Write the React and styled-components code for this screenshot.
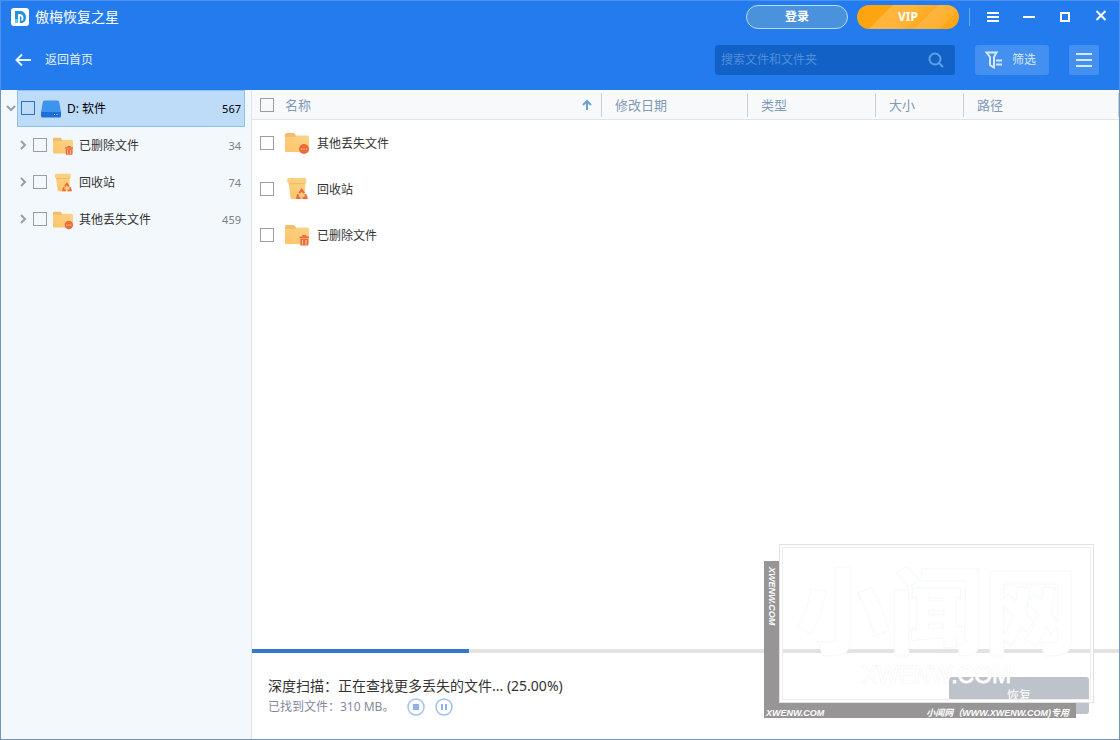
import { useState } from "react";
import styled, { createGlobalStyle, css } from "styled-components";

const GlobalStyle = createGlobalStyle`
  * {
    box-sizing: border-box;
  }
  body {
    margin: 0;
    font-family: "Noto Sans", "Noto Sans CJK SC", sans-serif;
    font-size: 12px;
    line-height: 18px;
    color: #333;
    background: #fff;
  }
  button,
  input {
    font: inherit;
  }
`;

const Window = styled.div`
  position: relative;
  display: flex;
  flex-direction: column;
  width: 100%;
  min-height: 100vh;
`;

const Header = styled.header`
  background: #237bee;
  color: #fff;
  border: 1px solid #4a92f2;
  border-bottom: none;
`;

const TitleBar = styled.div`
  display: flex;
  align-items: center;
  height: 32px;
  padding-left: 10px;
`;

const AppName = styled.h1`
  flex: 1;
  margin: 0 0 0 6px;
  font-size: 14px;
  font-weight: 400;
  line-height: 18px;
`;

const Pill = styled.button`
  width: 102px;
  height: 24px;
  margin-right: 9px;
  padding: 0;
  border: 1px solid #b8dcf8;
  border-radius: 12px;
  background: #4a92dc;
  color: #fff;
  font-weight: 700;
  cursor: pointer;
  ${(props) =>
    props.$vip &&
    css`
      border: none;
      background: linear-gradient(
        135deg,
        #ffa411 28%,
        #ffb63d 29%,
        #ffb43a 48%,
        #fdaa24 64%,
        #fdb440 65%,
        #ffb02c 84%,
        #ffa716 85%
      );
    `}
`;

const Divider = styled.span`
  width: 1px;
  height: 18px;
  margin: 0 5px 0 1px;
  background: #6aa8f8;
`;

const WindowButton = styled.button`
  display: flex;
  align-items: center;
  justify-content: center;
  width: 36px;
  height: 30px;
  padding: 0;
  border: none;
  background: none;
  color: #fff;
`;

const Toolbar = styled.div`
  display: flex;
  align-items: center;
  gap: 20px;
  padding: 12px 20px 15px 14px;
`;

const BackLink = styled.a`
  display: flex;
  align-items: center;
  gap: 14px;
  margin-right: auto;
  color: #e4f1ff;
  text-decoration: none;
`;

const SearchBox = styled.div`
  display: flex;
  align-items: center;
  width: 240px;
  height: 30px;
  padding: 0 11px 0 6px;
  border-radius: 3px;
  background: #1261c6;
  color: #5f9fe8;
`;

const SearchInput = styled.input`
  flex: 1;
  min-width: 0;
  padding: 0;
  border: none;
  outline: none;
  background: none;
  color: #fff;
  &::placeholder {
    color: #4f8edb;
    opacity: 1;
  }
`;

const ToolButton = styled.button`
  display: flex;
  align-items: center;
  justify-content: center;
  gap: 10px;
  width: ${(props) => (props.$wide ? "74px" : "30px")};
  height: 30px;
  padding: ${(props) => (props.$wide ? "0 3px 0 0" : "0")};
  border: none;
  border-radius: 3px;
  background: #4490f1;
  color: #d5e8ff;
`;

const Body = styled.div`
  flex: 1;
  display: flex;
  border: 1px solid #6c98bd;
  border-top: none;
`;

const Sidebar = styled.nav`
  flex: none;
  width: 251px;
  border-right: 1px solid #dde3ea;
  background: #f3f8fd;
`;

const Tree = styled.ul`
  margin: 0;
  padding: 0;
  list-style: none;
`;

const TreeRow = styled.div`
  display: flex;
  align-items: center;
  height: 37px;
  padding-right: ${(props) => (props.$root ? "6px" : "10px")};
  padding-left: ${(props) => (props.$root ? "0" : "16px")};
`;

const Toggle = styled.button`
  display: flex;
  align-items: center;
  justify-content: center;
  flex: none;
  width: ${(props) => (props.$root ? "16px" : "12px")};
  margin-right: ${(props) => (props.$root ? "0" : "4px")};
  padding: ${(props) => (props.$root ? "0 0 1px 3px" : "0 0 1px")};
  border: none;
  background: none;
  color: #94a0ab;
`;

const TreeLabel = styled.label`
  flex: 1;
  display: flex;
  align-items: center;
  gap: 6px;
  height: 37px;
  input {
    margin-bottom: 1px;
  }
  ${(props) =>
    props.$selected &&
    css`
      padding: 0 3px;
      border: 1px solid #8fc1ee;
      background: #bedbf8;
      color: #000;
    `}
`;

const Count = styled.span`
  margin-left: auto;
  font-size: 11px;
  color: ${(props) => (props.$selected ? "#000" : "#7c8289")};
`;

const Checkbox = styled.input.attrs({ type: "checkbox" })`
  appearance: none;
  flex: none;
  width: 14px;
  height: 14px;
  margin: 0;
  border: 1px solid ${(props) => (props.$active ? "#2b71c9" : "#9b9fa5")};
  background: transparent;
  &:checked {
    background: #237bee;
  }
`;

const Main = styled.main`
  flex: 1;
  min-width: 0;
  display: flex;
  flex-direction: column;
`;

const TableArea = styled.div`
  flex: 1;
`;

const Table = styled.table`
  width: 100%;
  table-layout: fixed;
  border-collapse: separate;
  border-spacing: 0;
`;

const Th = styled.th`
  width: ${(props) => props.$width || "auto"};
  height: 30px;
  padding: 0 13px;
  border-bottom: 1px solid #dfe4e9;
  background: linear-gradient(#c3cfdb, #c3cfdb) right center / 1px 24px
    no-repeat #f7f9fb;
  color: #8199b6;
  font-size: 13px;
  font-weight: 400;
  text-align: left;
  &:first-child {
    padding: 0 10px 0 8px;
  }
`;

const HeadCell = styled.div`
  display: flex;
  align-items: center;
  gap: 11px;
  svg {
    margin-left: auto;
  }
`;

const Td = styled.td`
  height: 46px;
  padding: 0 8px;
`;

const FileLabel = styled.label`
  display: flex;
  align-items: center;
  svg {
    margin: 0 8px 0 11px;
  }
`;

const FileName = styled.span`
  padding-top: 2px;
`;

const Progress = styled.div`
  height: 4px;
  background: #e3e3e3;
`;

const ProgressFill = styled.div`
  height: 100%;
  background: #3377d2;
`;

const Footer = styled.footer`
  display: flex;
  justify-content: space-between;
  align-items: flex-start;
  height: 86px;
  padding: 24px 30px 0 16px;
`;

const ScanTitle = styled.p`
  margin: 0 0 2px;
  font-size: 14px;
  line-height: 18px;
`;

const ScanInfo = styled.div`
  display: flex;
  align-items: center;
  gap: 10px;
  height: 20px;
  color: #858a9b;
`;

const ScanText = styled.span`
  padding-right: 3px;
`;

const RoundButton = styled.button`
  display: flex;
  width: 18px;
  height: 18px;
  padding: 0;
  border: none;
  background: none;
`;

const RecoverButton = styled.button`
  width: 140px;
  height: 37px;
  padding: 0;
  border: none;
  border-radius: 3px;
  background: #bdc2cb;
  color: #fff;
`;

/* stamp laid over the bottom right corner of the window */
const Stamp = styled.div`
  position: absolute;
  right: 26px;
  bottom: 22px;
  display: grid;
  grid-template-columns: 15px 297px 18px;
  grid-template-rows: 17px 142px 15px;
  pointer-events: none;
`;

const StampSide = styled.div`
  grid-column: 1;
  grid-row: 2 / 4;
  padding-top: 6px;
  background: #979595;
  color: #fff;
  font: italic 700 9px/15px "Liberation Sans", sans-serif;
  writing-mode: vertical-rl;
`;

const StampBottom = styled.div`
  grid-column: 1 / 3;
  grid-row: 3;
  display: flex;
  justify-content: space-between;
  padding: 0 7px 0 2px;
  background: #979595;
  color: #fff;
  font: italic 700 9px/20px "Liberation Sans", "Noto Sans CJK SC", sans-serif;
`;

const StampFrame = styled.div`
  grid-column: 2 / 4;
  grid-row: 1 / 3;
  display: flex;
  flex-direction: column;
  align-items: center;
  border: 1px solid #e2e2e2;
  outline: 1px solid #ededed;
  outline-offset: -4px;
  box-shadow: inset 0 0 0 3px #fff;
`;

const StampName = styled.div`
  margin-top: 28px;
  color: #fff;
  font: 900 94px/84px "Liberation Sans", "Noto Sans CJK SC", sans-serif;
  -webkit-text-stroke: 1px #f6f9f9;
`;

const StampSite = styled.div`
  margin-top: 4px;
  color: #fff;
  font: 23px/28px "Liberation Sans", sans-serif;
  -webkit-text-stroke: 1px #f4f4f4;
  paint-order: stroke fill;
`;

const LogoIcon = () => (
  <svg width="18" height="18" viewBox="0 0 18 18">
    <rect width="18" height="18" rx="3" fill="#fff" />
    <path d="M4 3h6.500q4.500 1.500 4.500 6.500 0 4-3.500 5.500H4z" fill="#2394dc" />
    <path
      d="M8 15.500V7q3.500 0 3.500 3 0 1.500-.8 2.500"
      fill="none"
      stroke="#fff"
      strokeWidth="1.800"
    />
    <path d="M4 11h3v4H4z" fill="#63c4f4" />
  </svg>
);

const TrashBadge = () => (
  <g fill="#ee6c3c">
    <path d="M14.500 12.500h9.500v1.800h-9.500zM17.300 11h4v1.500h-4z" />
    <path d="M15.300 14.800h8V21.500h-8z" />
    <path d="M17.500 16v4.500M21 16v4.500" stroke="#fbd3b4" />
  </g>
);

const DotsBadge = () => (
  <g>
    <circle cx="19" cy="17" r="5" fill="#ee6c3c" />
    <path d="M16 16.500h1.300v1.300H16zm2.400 0h1.300v1.300h-1.300zm2.400 0h1.300v1.300h-1.300z" fill="#fbc4a4" />
  </g>
);

const FolderIcon = ({ size, badge }) => (
  <svg width={size} height={size} viewBox="0 -1 24 24">
    <path d="M0 2.500Q0 1 1.500 1h7q1 0 1.500 1l1 2H22v6H0z" fill="#f5bd69" />
    <path d="M0 5h10l1.500-1.500h11Q24 3.500 24 5v13.500q0 1.500-1.500 1.500h-21Q0 20 0 18.500z" fill="url(#folder)" />
    {badge === "trash" ? <TrashBadge /> : <DotsBadge />}
  </svg>
);

const BinIcon = ({ size }) => (
  <svg width={size} height={size} viewBox="0 0 24 24">
    <path d="M3.500 5h17l-1 15.500q-.2 1.500-1.500 1.500H7q-1.300 0-1.500-1.500z" fill="url(#folder)" />
    <path d="M4 1h16q1.200 0 1.200 1.300V5q0 1-1 1H3.300q-1 0-1-1V2.300Q2.300 1 4 1z" fill="#fbcf80" />
    <path d="M4 6h16v1.200H4z" fill="#f5bb65" />
    <g fill="none" stroke="#ee6c3c" strokeWidth="2.200">
      <path d="M14.300 16.200l2.400-3.400 2.400 3.400" />
      <path d="M13.200 17.200l-1 3.600h3.200" />
      <path d="M20.200 17.200l1.200 3.600h-3.800" />
    </g>
  </svg>
);

const DriveIcon = () => (
  <svg width="20" height="20" viewBox="0 0 20 20">
    <path d="M1.800 3Q2 1.500 3.500 1.500h13q1.500 0 1.700 1.500L20 13H0z" fill="#3e94ec" />
    <path d="M0 13h20v4q0 1.500-1.500 1.500h-17Q0 18.500 0 17z" fill="#1e6fda" />
    <path d="M13 15h1v1h-1zm2.500 0h1v1h-1z" fill="#d4eaff" />
  </svg>
);

const Gradients = () => (
  <svg width="0" height="0" style={{ position: "absolute" }}>
    <defs>
      <linearGradient id="folder" x1="0" y1="1" x2="1" y2="0">
        <stop offset="0" stopColor="#fdc36a" />
        <stop offset="1" stopColor="#fbd486" />
      </linearGradient>
    </defs>
  </svg>
);

const Chevron = ({ open }) => (
  <svg width="12" height="12" viewBox="0 0 12 12" fill="none" stroke="currentColor" strokeWidth="2">
    <path d={open ? "M2 4l4 4 4-4" : "M4 2l4 4-4 4"} />
  </svg>
);

const ItemIcon = ({ kind, size }) => {
  if (kind === "drive") return <DriveIcon />;
  if (kind === "bin") return <BinIcon size={size} />;
  return <FolderIcon size={size} badge={kind} />;
};

const folders = [
  { name: "已删除文件", kind: "trash", count: 34 },
  { name: "回收站", kind: "bin", count: 74 },
  { name: "其他丢失文件", kind: "dots", count: 459 },
];

const files = [folders[2], folders[1], folders[0]];

const App = () => {
  const [query, setQuery] = useState("");
  const progress = 25;

  return (
    <Window>
      <GlobalStyle />
      <Gradients />
      <Header>
        <TitleBar>
          <LogoIcon />
          <AppName>傲梅恢复之星</AppName>
          <Pill>登录</Pill>
          <Pill $vip>VIP</Pill>
          <Divider />
          <WindowButton aria-label="菜单">
            <svg width="12" height="12" stroke="currentColor" strokeWidth="2">
              <path d="M0 2h12M0 6h12M0 10h12" />
            </svg>
          </WindowButton>
          <WindowButton aria-label="最小化">
            <svg width="12" height="12" stroke="currentColor" strokeWidth="2">
              <path d="M0 6h12" />
            </svg>
          </WindowButton>
          <WindowButton aria-label="最大化">
            <svg width="10" height="10" fill="none" stroke="currentColor" strokeWidth="2">
              <path d="M1 1h8v8H1z" />
            </svg>
          </WindowButton>
          <WindowButton aria-label="关闭">
            <svg width="12" height="14" fill="none" stroke="currentColor" strokeWidth="2">
              <path d="M1.500 1l9 9M10.500 1l-9 9" />
            </svg>
          </WindowButton>
        </TitleBar>
        <Toolbar>
          <BackLink href="#">
            <svg width="16" height="14" fill="none" stroke="currentColor" strokeWidth="2">
              <path d="M16 7H1M7 1.500L1.500 7 7 12.500" />
            </svg>
            返回首页
          </BackLink>
          <SearchBox>
            <SearchInput
              aria-label="搜索"
              placeholder="搜索文件和文件夹"
              value={query}
              onChange={(e) => setQuery(e.target.value)}
            />
            <svg width="16" height="16" fill="none" stroke="currentColor" strokeWidth="2">
              <circle cx="7" cy="7" r="5.500" />
              <path d="M11 11l4 4" />
            </svg>
          </SearchBox>
          <ToolButton $wide>
            <svg width="17" height="18" fill="none" stroke="currentColor" strokeWidth="2">
              <path d="M1.500 1.500h10L9 6v10.500L5 14V6z" />
              <path d="M11 9.500h6M11 13.500h6" />
            </svg>
            筛选
          </ToolButton>
          <ToolButton aria-label="视图">
            <svg width="16" height="16" stroke="currentColor" strokeWidth="2">
              <path d="M0 2h16M0 8h16M0 14h16" />
            </svg>
          </ToolButton>
        </Toolbar>
      </Header>
      <Body>
        <Sidebar>
          <Tree>
            <li>
              <TreeRow $root>
                <Toggle $root aria-label="折叠">
                  <Chevron open />
                </Toggle>
                <TreeLabel $selected>
                  <Checkbox $active />
                  <ItemIcon kind="drive" />
                  D: 软件
                  <Count $selected>567</Count>
                </TreeLabel>
              </TreeRow>
              <Tree>
                {folders.map((item) => (
                  <li key={item.name}>
                    <TreeRow>
                      <Toggle aria-label="展开">
                        <Chevron />
                      </Toggle>
                      <TreeLabel>
                        <Checkbox />
                        <ItemIcon kind={item.kind} size={20} />
                        {item.name}
                        <Count>{item.count}</Count>
                      </TreeLabel>
                    </TreeRow>
                  </li>
                ))}
              </Tree>
            </li>
          </Tree>
        </Sidebar>
        <Main>
          <TableArea>
            <Table>
              <thead>
                <tr>
                  <Th $width="350px">
                    <HeadCell>
                      <Checkbox aria-label="全选" />
                      名称
                      <svg width="10" height="12" fill="none" stroke="#6fa0d4" strokeWidth="2">
                        <path d="M5 11V2M1 6l4-4 4 4" />
                      </svg>
                    </HeadCell>
                  </Th>
                  <Th $width="146px">修改日期</Th>
                  <Th $width="128px">类型</Th>
                  <Th $width="88px">大小</Th>
                  <Th>路径</Th>
                </tr>
              </thead>
              <tbody>
                {files.map((file) => (
                  <tr key={file.name}>
                    <Td>
                      <FileLabel>
                        <Checkbox />
                        <ItemIcon kind={file.kind} size={24} />
                        <FileName>{file.name}</FileName>
                      </FileLabel>
                    </Td>
                    <Td />
                    <Td />
                    <Td />
                    <Td />
                  </tr>
                ))}
              </tbody>
            </Table>
          </TableArea>
          <Progress role="progressbar" aria-label="扫描进度" aria-valuenow={progress}>
            <ProgressFill style={{ width: `${progress}%` }} />
          </Progress>
          <Footer>
            <div>
              <ScanTitle>深度扫描：正在查找更多丢失的文件... (25.00%)</ScanTitle>
              <ScanInfo>
                <ScanText>已找到文件：310 MB。</ScanText>
                <RoundButton aria-label="停止">
                  <svg width="18" height="18">
                    <circle cx="9" cy="9" r="8" fill="none" stroke="#9cc2f0" strokeWidth="1.500" />
                    <path d="M6 6h6v6H6z" fill="#8db2ec" />
                  </svg>
                </RoundButton>
                <RoundButton aria-label="暂停">
                  <svg width="18" height="18">
                    <circle cx="9" cy="9" r="8" fill="none" stroke="#9cc2f0" strokeWidth="1.500" />
                    <path d="M6 6h2v6H6zM10 6h2v6h-2z" fill="#8db2ec" />
                  </svg>
                </RoundButton>
              </ScanInfo>
            </div>
            <RecoverButton>恢复</RecoverButton>
          </Footer>
        </Main>
      </Body>
      <Stamp>
        <StampSide>XWENW.COM</StampSide>
        <StampBottom>
          <span>XWENW.COM</span>
          <span>小闻网（WWW.XWENW.COM)专用</span>
        </StampBottom>
        <StampFrame>
          <StampName>小闻网</StampName>
          <StampSite>XWENW.COM</StampSite>
        </StampFrame>
      </Stamp>
    </Window>
  );
};

export default App;
